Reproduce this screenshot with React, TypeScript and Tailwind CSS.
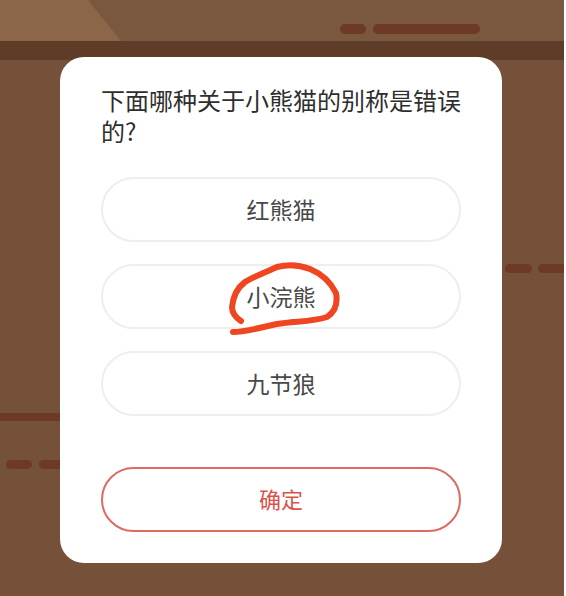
import React from "react";

const font = { fontFamily: '"Noto Sans CJK SC", "Noto Sans", sans-serif' };

function Option({ label, children }: { label: string; children?: React.ReactNode }) {
  return (
    <div className="relative flex h-[65px] items-center justify-center rounded-full border-2 border-[#eeeeee] text-[23px] leading-none text-[#484848]">
      <span>{label}</span>
      {children}
    </div>
  );
}

export default function App() {
  return (
    <div className="relative flex h-[596px] w-[566px] justify-center overflow-hidden bg-white" style={font}>
      <div className="absolute inset-y-0 left-0 flex w-[564px] flex-col bg-[#745138]">
        <div className="relative h-[41px] overflow-hidden bg-[#7a5840]">
          <div className="absolute left-0 top-0 h-[41px] w-[121px] bg-[#8b6649] [clip-path:polygon(0_0,88px_0,121px_41px,0_41px)]" />
          <div className="absolute left-[340px] top-[24px] h-[10px] w-[26px] rounded-full bg-[#6d3a25]" />
          <div className="absolute left-[373px] top-[24px] h-[10px] w-[107px] rounded-full bg-[#6d3a25]" />
        </div>
        <div className="h-[19px] bg-[#5e3c28]" />
        <div className="absolute left-0 top-[413px] h-[8px] w-[62px] bg-[#6d3a25]" />
        <div className="absolute left-[6px] top-[460px] h-[9px] w-[26px] rounded-full bg-[#6d3a25]" />
        <div className="absolute left-[39px] top-[460px] h-[9px] w-[24px] rounded-l-full bg-[#6d3a25]" />
        <div className="absolute left-[505px] top-[264px] h-[9px] w-[27px] rounded-full bg-[#6d3a25]" />
        <div className="absolute left-[538px] top-[264px] h-[9px] w-[26px] rounded-l-full bg-[#6d3a25]" />
      </div>
      <div className="absolute left-[60px] top-[57px] flex h-[506px] w-[442px] flex-col rounded-[24px] bg-white px-[41px] pt-[27px]">
        <div className="text-[24px] leading-[31px] text-[#2e2e2e]">下面哪种关于小熊猫的别称是错误的?</div>
        <div className="mt-[31px] flex flex-col gap-[22px]">
          <Option label="红熊猫" />
          <Option label="小浣熊">
            <svg className="absolute left-[125px] top-[-4px] overflow-visible" width="116" height="74" viewBox="0 0 116 74" fill="none">
              <path
                d="M13 59 C7 55 4 51 4 45 C5 35 9 26 17 20 C27 14 38 10 49 5 C60 2 72 3 82 7 C94 12 103 21 108 31 C110 42 107 50 99 55 C84 60 66 59 49 62 C34 65 18 70 5 70"
                stroke="#ef4520"
                strokeWidth="6"
                strokeLinecap="round"
                strokeLinejoin="round"
              />
            </svg>
          </Option>
          <Option label="九节狼" />
        </div>
        <div className="mt-[51px] flex h-[65px] items-center justify-center rounded-full border-2 border-[#de6a60] pb-[3px] text-[22px] leading-none text-[#d9534a]">
          确定
        </div>
      </div>
    </div>
  );
}
